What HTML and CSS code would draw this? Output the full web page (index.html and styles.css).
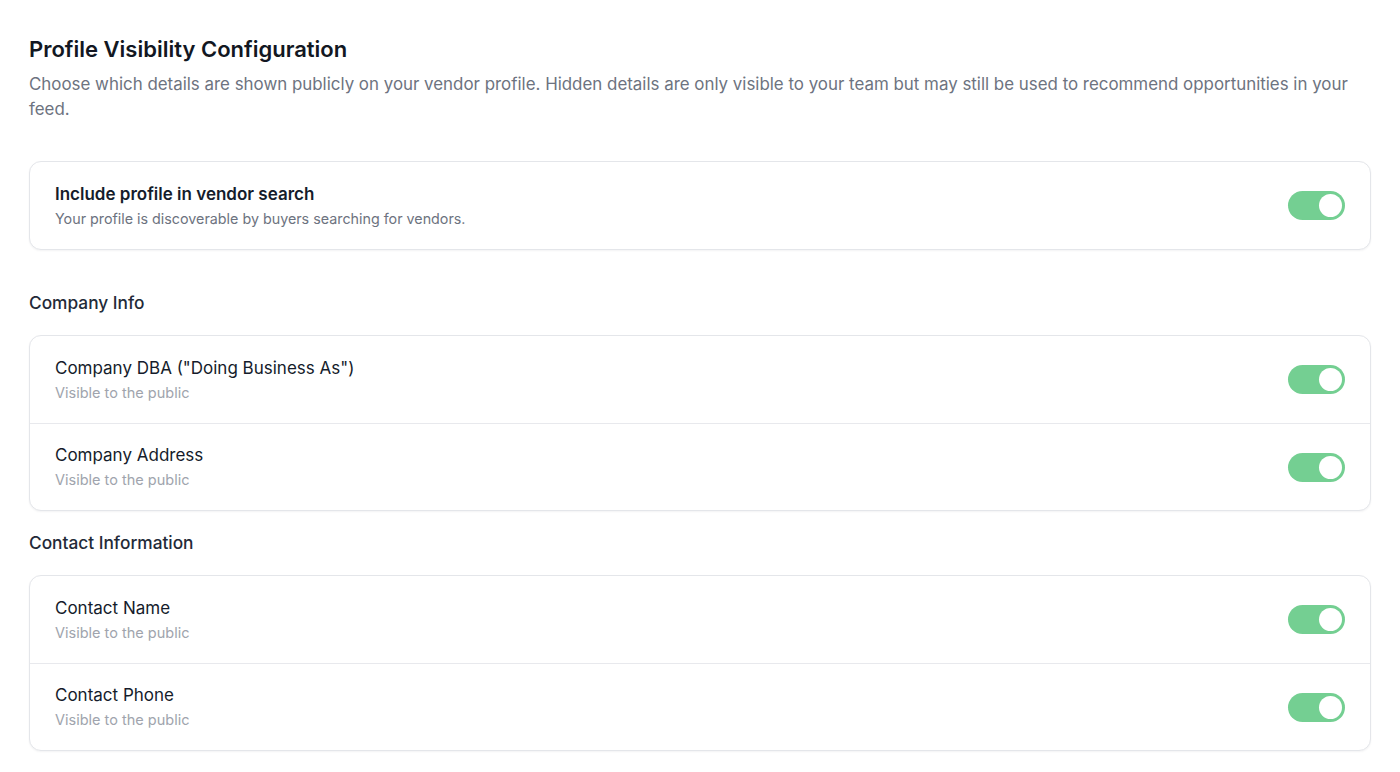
FILE: index.html
```html
<!DOCTYPE html>
<html lang="en">
<head>
<meta charset="utf-8">
<title>Profile Visibility Configuration</title>
<link rel="stylesheet" href="styles.css">
</head>
<body>
<main class="page">
  <header class="intro">
    <h1 class="title">Profile Visibility Configuration</h1>
    <p class="lead">Choose which details are shown publicly on your vendor profile. Hidden details are only visible to your team but may still be used to recommend opportunities in your feed.</p>
  </header>

  <section class="card card-main">
    <div class="row">
      <div class="row-text">
        <div class="row-title strong">Include profile in vendor search</div>
        <div class="row-sub dark">Your profile is discoverable by buyers searching for vendors.</div>
      </div>
      <span class="toggle on" role="switch" aria-checked="true"><span class="knob"></span></span>
    </div>
  </section>

  <h2 class="group-title">Company Info</h2>
  <section class="card">
    <div class="row">
      <div class="row-text">
        <div class="row-title">Company DBA ("Doing Business As")</div>
        <div class="row-sub">Visible to the public</div>
      </div>
      <span class="toggle on" role="switch" aria-checked="true"><span class="knob"></span></span>
    </div>
    <div class="row">
      <div class="row-text">
        <div class="row-title">Company Address</div>
        <div class="row-sub">Visible to the public</div>
      </div>
      <span class="toggle on" role="switch" aria-checked="true"><span class="knob"></span></span>
    </div>
  </section>

  <h2 class="group-title">Contact Information</h2>
  <section class="card">
    <div class="row">
      <div class="row-text">
        <div class="row-title">Contact Name</div>
        <div class="row-sub">Visible to the public</div>
      </div>
      <span class="toggle on" role="switch" aria-checked="true"><span class="knob"></span></span>
    </div>
    <div class="row">
      <div class="row-text">
        <div class="row-title">Contact Phone</div>
        <div class="row-sub">Visible to the public</div>
      </div>
      <span class="toggle on" role="switch" aria-checked="true"><span class="knob"></span></span>
    </div>
  </section>
</main>
</body>
</html>
```
FILE: styles.css
```css
* { box-sizing: border-box; }

html, body {
  margin: 0;
  background: #ffffff;
}

body {
  font-family: "Inter", "Noto Sans", "Liberation Sans", sans-serif;
  color: #151c2b;
}

.page {
  padding: 35px 29px 20px 29px;
  display: flex;
  flex-direction: column;
}

.intro {
  margin-bottom: 39px;
}

.title {
  margin: 0;
  font-size: 22px;
  line-height: 28px;
  font-weight: 600;
  color: #121722;
}

.lead {
  margin: 9px 0 0;
  font-size: 16.9px;
  line-height: 25px;
  color: #6d7380;
}

.card {
  border: 1px solid #e4e6ea;
  border-radius: 12px;
  background: #fff;
  box-shadow: 0 1px 2px rgba(20, 28, 43, 0.05);
  overflow: hidden;
}

.card-main {
  margin-bottom: 21px;
}

.row {
  display: flex;
  align-items: center;
  justify-content: space-between;
  height: 87px;
  padding: 0 25px;
}

.row + .row {
  border-top: 1px solid #e8e9ed;
}

.row-text {
  display: flex;
  flex-direction: column;
  gap: 4px;
}

.row-title {
  font-size: 17px;
  line-height: 22px;
  font-weight: 400;
  color: #151c2b;
}

.row-title.strong {
  font-weight: 600;
}

.row-sub {
  font-size: 14.5px;
  line-height: 20px;
  color: #a0a4ad;
}

.row-sub.dark {
  font-size: 14.3px;
  color: #6d7380;
}

.group-title {
  margin: 20px 0 20px;
  font-size: 17.3px;
  line-height: 24px;
  font-weight: 500;
  color: #232a38;
}

.toggle {
  position: relative;
  flex: none;
  width: 57px;
  height: 29px;
  border-radius: 15px;
  background: #d5d8de;
}

.toggle.on {
  background: #74cf92;
}

.knob {
  position: absolute;
  top: 3px;
  left: 3px;
  width: 23px;
  height: 23px;
  border-radius: 50%;
  background: #ffffff;
}

.toggle.on .knob {
  left: 31px;
}
```
